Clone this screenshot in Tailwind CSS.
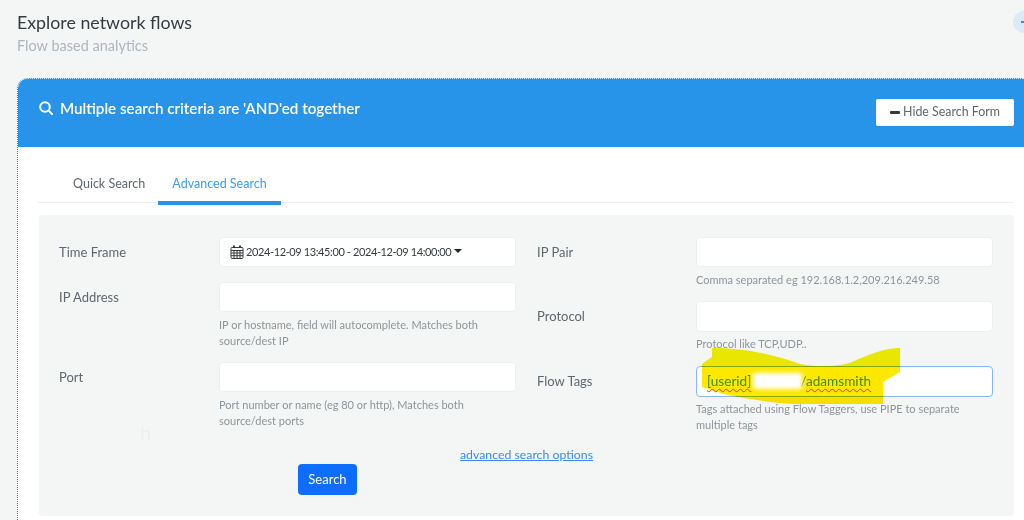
<!DOCTYPE html>
<html>
<head>
	<meta charset="utf-8">
	<title>Explore network flows</title>
	<script src="https://cdn.jsdelivr.net/npm/@tailwindcss/browser@4"></script>
</head>
<body class="bg-[#f4f6f6] font-['Lato',sans-serif] text-[#495057]">
	<div class="relative w-[1024px] h-[520px] overflow-hidden bg-[#f4f6f6] blur-[0.5px]">
		<!-- page title -->
		<div class="pl-[17px] pt-[10px] h-[78px]">
			<h1 class="text-[17.8px] leading-[24px] text-[#343a40]">Explore network flows</h1>
			<p class="text-[14.5px] leading-[20px] mt-[2px] text-[#adb5bd]">Flow based analytics</p>
		</div>
		<div class="absolute left-[1013px] top-[11px] w-[22px] h-[22px] rounded-full bg-[#dbe9f8]">
			<div class="ml-[8px] mt-[10px] w-[3px] h-[2px] bg-[#2a93ea]"></div>
		</div>

		<!-- card -->
		<div class="ml-[17px] bg-white border-l border-dotted border-[#2a7fe0] rounded-tl-[10px] h-[442px]">
			<div class="h-[69px] bg-[#2794ea] border-t border-dotted border-[#cfe6fa] rounded-tl-[10px] flex items-start justify-between pl-[21px] pr-[10px]">
				<div class="flex items-center gap-[7px] mt-[19px] text-white text-[15.2px] leading-[20px] font-semibold">
					<svg width="14" height="14" viewBox="0 0 14 14" fill="none" stroke="white" stroke-width="2"><circle cx="6" cy="6" r="4.8"/><path d="M9.6 9.6 13.2 13.2" stroke-linecap="round"/></svg>
					<span>Multiple search criteria are 'AND'ed together</span>
				</div>
				<button class="mt-[20px] w-[138px] h-[27px] bg-white rounded-[2px] flex items-center justify-center gap-[3px] text-[12.4px] text-[#5f666d]">
					<span class="w-[10px] h-[3px] bg-[#343a40] rounded-[1px]"></span>
					<span>Hide Search Form</span>
				</button>
			</div>

			<!-- tabs -->
			<div class="ml-[20px] mr-[10px] mt-[22px] h-[34px] border-b border-[#edf0f0] flex text-[12.5px] leading-[30px]">
				<div class="w-[120px] pl-[35px] text-[#5f666d]">Quick Search</div>
				<div class="w-[123px] h-[36px] text-center text-[#3d9bee] border-b-[4px] border-[#2794ea]">Advanced Search</div>
			</div>

			<!-- search form -->
			<div class="ml-[21px] mr-[10px] mt-[12px] h-[301px] bg-[#f4f6f6] rounded-[4px] pt-[22px] pl-[20px] relative">
				<div class="flex gap-[21px]">
					<div class="w-[457px]">
						<div class="flex h-[45px] text-[13px]">
							<label class="w-[160px] leading-[30px] text-[#5f666d]">Time Frame</label>
							<div class="w-[297px] h-[30px] bg-white border border-[#eceff1] rounded-[4px] flex items-center pl-[10px] text-[11px] tracking-[-0.39px] text-[#343a40]">
								<svg width="14" height="14" viewBox="0 0 14 14" fill="none" stroke="#343a40" stroke-width="1" class="mr-[2px]"><rect x="1" y="2.5" width="12" height="11" rx="1"/><path d="M1 5.5H13M4 5.5V13.5M7 5.5V13.5M10 5.5V13.5M1 8H13M1 10.7H13"/><path d="M4 .5V3M10 .5V3" stroke-width="2"/></svg>
								<span>2024-12-09 13:45:00 - 2024-12-09 14:00:00</span>
								<span class="ml-[3px] mb-[3px] w-0 h-0 border-x-[4px] border-x-transparent border-t-[4px] border-t-[#212529]"></span>
							</div>
						</div>
						<div class="flex h-[80px] text-[13px]">
							<label class="w-[160px] leading-[30px] text-[#5f666d]">IP Address</label>
							<div class="w-[297px]">
								<div class="h-[30px] bg-white border border-[#eceff1] rounded-[4px]"></div>
								<p class="mt-[5px] text-[11px] leading-[15.5px] text-[#8d949a]">IP or hostname, field will autocomplete. Matches both source/dest IP</p>
							</div>
						</div>
						<div class="flex text-[13px]">
							<label class="w-[160px] leading-[30px] text-[#5f666d]">Port</label>
							<div class="w-[297px]">
								<div class="h-[30px] bg-white border border-[#eceff1] rounded-[4px]"></div>
								<p class="mt-[5px] text-[11px] leading-[15.5px] text-[#8d949a]">Port number or name (eg 80 or http), Matches both source/dest ports</p>
							</div>
						</div>
					</div>
					<div class="w-[456px]">
						<div class="flex h-[64px] text-[13px]">
							<label class="w-[159px] leading-[30px] text-[#5f666d]">IP Pair</label>
							<div class="w-[297px]">
								<div class="h-[30px] bg-white border border-[#eceff1] rounded-[4px]"></div>
								<p class="mt-[5px] text-[11px] leading-[15.5px] text-[#8d949a]">Comma separated eg 192.168.1.2,209.216.249.58</p>
							</div>
						</div>
						<div class="flex h-[65px] text-[13px]">
							<label class="w-[159px] leading-[30px] text-[#5f666d]">Protocol</label>
							<div class="w-[297px]">
								<div class="h-[31px] bg-white border border-[#eceff1] rounded-[4px]"></div>
								<p class="mt-[4px] text-[11px] leading-[15.5px] text-[#8d949a]">Protocol like TCP,UDP..</p>
							</div>
						</div>
						<div class="flex text-[13px]">
							<label class="w-[159px] leading-[30px] text-[#5f666d]">Flow Tags</label>
							<div class="w-[297px]">
								<div class="h-[31px] bg-white border border-[#86b7fe] rounded-[4px] pl-[10px] text-[13.6px] leading-[29px] text-[#3f9a3a] underline-offset-2 whitespace-nowrap">
									<span class="underline decoration-wavy decoration-[#f03a20] decoration-1">[userid]</span><span class="inline-block w-[49px]"></span><span>/</span><span class="underline decoration-wavy decoration-[#f03a20] decoration-1">adamsmith</span>
								</div>
								<p class="mt-[4px] text-[11px] leading-[15.5px] text-[#8d949a]">Tags attached using Flow Taggers, use PIPE to separate multiple tags</p>
							</div>
						</div>
					</div>
				</div>
				<span class="absolute left-[101px] top-[202px] text-[20px] text-[#eceff0]">h</span>
				<a class="absolute left-[421px] top-[231px] text-[12.3px] leading-[18px] text-[#3f86f5] underline">advanced search options</a>
				<button class="absolute left-[259px] top-[249px] w-[59px] h-[31px] bg-[#0d6efd] rounded-[4px] text-white text-[13px]">Search</button>
			</div>
		</div>

		<!-- highlighter scribble over the flow tags field -->
		<svg class="absolute left-0 top-0 mix-blend-multiply" width="1024" height="520" viewBox="0 0 1024 520">
			<path d="M702 366 L900 366 L900 372 L883 382 L883 404 L793 404 C770 403 745 398 727 395 L702 387 Z" fill="#ffe800"/>
			<path d="M712 348 C740 348 770 353 800 364 C825 368 840 366 852 362 C870 354 885 348 900 348 L900 366 L702 366 L702 364 L712 357 Z" fill="#f2f000"/>
		</svg>
		<div class="absolute left-[753px] top-[373px] w-[49px] h-[16px] bg-white blur-[2px]"></div>
	</div>
</body>
</html>
